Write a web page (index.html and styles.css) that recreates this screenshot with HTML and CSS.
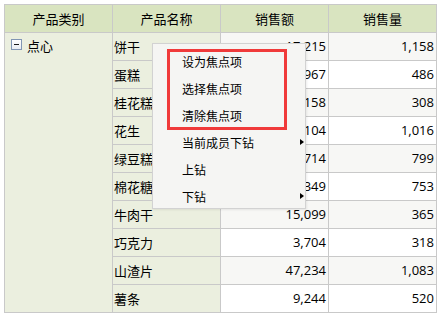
FILE: index.html
```html
<!DOCTYPE html>
<html lang="zh">
<head>
<meta charset="utf-8">
<link rel="stylesheet" href="styles.css">
</head>
<body>
<div class="grid">
  <div class="hd">产品类别</div>
  <div class="hd">产品名称</div>
  <div class="hd">销售额</div>
  <div class="hd">销售量</div>

  <div class="cat"><span class="tog"></span><span>点心</span></div>

  <div class="name">饼干</div><div class="num alt">17,215</div><div class="num alt">1,158</div>
  <div class="name">蛋糕</div><div class="num">6,967</div><div class="num">486</div>
  <div class="name">桂花糕</div><div class="num alt">4,158</div><div class="num alt">308</div>
  <div class="name">花生</div><div class="num">12,104</div><div class="num">1,016</div>
  <div class="name">绿豆糕</div><div class="num alt">9,714</div><div class="num alt">799</div>
  <div class="name">棉花糖</div><div class="num">8,349</div><div class="num">753</div>
  <div class="name">牛肉干</div><div class="num alt">15,099</div><div class="num alt">365</div>
  <div class="name">巧克力</div><div class="num">3,704</div><div class="num">318</div>
  <div class="name">山渣片</div><div class="num alt">47,234</div><div class="num alt">1,083</div>
  <div class="name">薯条</div><div class="num">9,244</div><div class="num">520</div>
</div>

<div class="menu">
  <div class="item">设为焦点项</div>
  <div class="item">选择焦点项</div>
  <div class="item">清除焦点项</div>
  <div class="item sub">当前成员下钻</div>
  <div class="item">上钻</div>
  <div class="item sub">下钻</div>
</div>
<div class="mark"></div>
</body>
</html>
```

FILE: styles.css
```css
html, body {
  margin: 0;
  padding: 0;
  background: #ffffff;
}
body {
  padding: 4px;
  font-family: "Open Sans", "Noto Sans CJK SC", sans-serif;
  font-size: 13px;
  color: #000;
}
.grid {
  display: grid;
  grid-template-columns: repeat(4, 108px);
  grid-auto-rows: 28px;
  width: 433px;
  box-sizing: border-box;
  border-left: 1px solid #c9c9c9;
  border-top: 1px solid #c9c9c9;
}
.grid > div {
  border-right: 1px solid #c9c9c9;
  border-bottom: 1px solid #c9c9c9;
  box-sizing: border-box;
  line-height: 27px;
  white-space: nowrap;
  overflow: hidden;
}
.hd {
  background: #d9e4c0;
  text-align: center;
  font-family: "Noto Sans CJK SC", sans-serif;
}
.cat {
  grid-row: span 10;
  background: #ebefdf;
  display: flex;
  align-items: flex-start;
  padding: 6px 0 0 6px;
  line-height: 13px !important;
  font-family: "Noto Sans CJK SC", sans-serif;
}
.tog {
  width: 11px;
  height: 11px;
  box-sizing: border-box;
  border: 1px solid #8196b4;
  background: linear-gradient(#ffffff, #e8ecf2);
  position: relative;
  margin-right: 5px;
  flex: none;
}
.tog::after {
  content: "";
  position: absolute;
  left: 2px;
  top: 4px;
  width: 5px;
  height: 1px;
  background: #1a1a1a;
}
.name {
  background: #ebefdf;
  padding-left: 1px;
  font-family: "Noto Sans CJK SC", sans-serif;
}
.num {
  background: #ffffff;
  text-align: right;
  padding-right: 2px;
}
.num.alt {
  background: #f7f7f5;
}
.menu {
  position: absolute;
  left: 152px;
  top: 43px;
  width: 154px;
  height: 166px;
  box-sizing: border-box;
  background: #f5f5f3;
  border: 1px solid #d2d2d2;
  box-shadow: 1px 1px 2px rgba(0, 0, 0, 0.08);
  padding: 4px 0 0 0;
  font-family: "Noto Sans CJK SC", sans-serif;
  font-size: 12px;
}
.item {
  height: 27px;
  line-height: 27px;
  padding-left: 29px;
  position: relative;
}
.item.sub::after {
  content: "";
  position: absolute;
  right: 1px;
  top: 10px;
  border-left: 4px solid #000;
  border-top: 3.5px solid transparent;
  border-bottom: 3.5px solid transparent;
}
.mark {
  position: absolute;
  left: 167px;
  top: 49px;
  width: 120px;
  height: 81px;
  box-sizing: border-box;
  border: 3px solid #f03a3a;
}
```
